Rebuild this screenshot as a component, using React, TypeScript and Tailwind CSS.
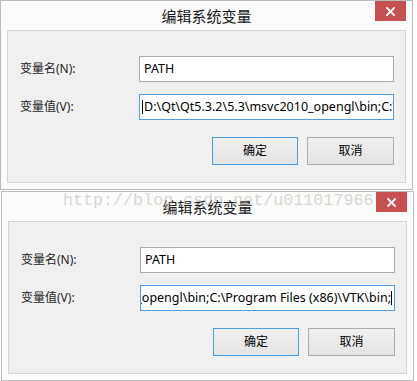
import React from "react";

const ui = "font-['Segoe_UI','Noto_Sans','Noto_Sans_CJK_SC',sans-serif]";

type DialogProps = {
  value: string;
  caretAtEnd?: boolean;
  className?: string;
};

function CloseButton() {
  return (
    <button
      aria-label="关闭"
      className="absolute top-0 right-[6px] flex h-[20px] w-[31px] items-center justify-center bg-[#c75050]"
    >
      <svg width="9" height="9" viewBox="0 0 9 9">
        <path
          d="M1 1L8 8M8 1L1 8"
          stroke="#ffffff"
          strokeWidth="1.8"
          strokeLinecap="square"
        />
      </svg>
    </button>
  );
}

function Caret() {
  return <span className="inline-block h-[14px] w-[1px] shrink-0 bg-black" />;
}

function Dialog({ value, caretAtEnd, className = "" }: DialogProps) {
  return (
    <div
      className={[
        "relative flex h-[190px] w-[413px] flex-col border border-[#bcbcbc] bg-[#fbfbfb]",
        className,
      ].join(" ")}
    >
      <div className="relative flex h-[29px] shrink-0 items-center justify-center">
        <span className="font-['Noto_Sans_CJK_SC',sans-serif] text-[15px] leading-none text-[#1a1a1a]">
          编辑系统变量
        </span>
        <CloseButton />
      </div>

      <div className="mx-[6px] flex h-[153px] flex-col border border-[#d6d6d6] bg-[#f0f0f0] pt-[25px] pr-[11px]">
        <div className="flex items-center">
          <label className="w-[131px] pl-[12px] text-[12px] text-[#1e1e1e]">
            变量名(N):
          </label>
          <div className="flex h-[26px] w-[255px] items-center border border-[#abadb3] bg-white pl-[4px] text-[12.5px] text-black">
            PATH
          </div>
        </div>

        <div className="mt-[12px] flex items-center">
          <label className="w-[131px] pl-[12px] text-[12px] text-[#1e1e1e]">
            变量值(V):
          </label>
          {caretAtEnd ? (
            <div className="flex h-[26px] w-[255px] items-center justify-end overflow-hidden border border-[#569de5] bg-white pr-[2px] text-[12.5px] text-black">
              <span className="shrink-0 whitespace-nowrap">{value}</span>
              <Caret />
            </div>
          ) : (
            <div className="flex h-[26px] w-[255px] items-center overflow-hidden border border-[#569de5] bg-white pl-[2px] text-[12.5px] text-black">
              <Caret />
              <span className="ml-[1px] shrink-0 whitespace-nowrap">
                {value}
              </span>
            </div>
          )}
        </div>

        <div className="mt-[17px] flex justify-end gap-[9px]">
          <button className="h-[28px] w-[86px] border border-[#4c9be6] bg-gradient-to-b from-[#f0f0f0] to-[#e3e3e3] text-[12px] text-black">
            确定
          </button>
          <button className="h-[28px] w-[87px] border border-[#acacac] bg-gradient-to-b from-[#f0f0f0] to-[#e3e3e3] text-[12px] text-black">
            取消
          </button>
        </div>
      </div>
    </div>
  );
}

export default function App() {
  return (
    <div className={`relative h-[381px] w-[417px] overflow-hidden bg-white ${ui}`}>
      <Dialog value="D:\Qt\Qt5.3.2\5.3\msvc2010_opengl\bin;C:\Program Files (x86)\VTK\bin;" />
      <Dialog
        className="mt-[1px] ml-[1px]"
        value="D:\Qt\Qt5.3.2\5.3\msvc2010_opengl\bin;C:\Program Files (x86)\VTK\bin;"
        caretAtEnd
      />
      <div className="pointer-events-none absolute top-[191px] left-[63px] font-['Liberation_Mono',monospace] text-[16.7px] leading-[20px] text-[#b8b2a8]/50">
        http://blog.csdn.net/u011017966
      </div>
    </div>
  );
}
